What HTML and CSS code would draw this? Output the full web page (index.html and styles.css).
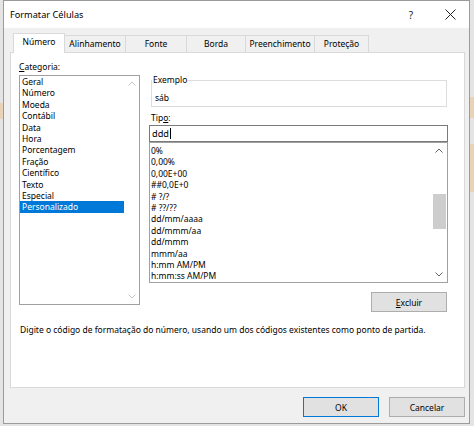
FILE: index.html
```html
<!DOCTYPE html>
<html lang="pt-BR">
<head>
<meta charset="utf-8">
<title>Formatar Células</title>
<link rel="stylesheet" href="styles.css">
</head>
<body>
<div class="dialog">
  <div class="titlebar">
    <span class="title">Formatar Células</span>
    <span class="tbtn help">?</span>
    <span class="tbtn close">
      <svg width="11" height="11" viewBox="0 0 11 11"><path d="M0.5 0.5 L10.5 10.5 M10.5 0.5 L0.5 10.5" stroke="#222" stroke-width="1" fill="none"/></svg>
    </span>
  </div>
  <div class="content">
    <div class="tabs">
      <div class="tab selected">Número</div>
      <div class="tab">Alinhamento</div>
      <div class="tab">Fonte</div>
      <div class="tab">Borda</div>
      <div class="tab">Preenchimento</div>
      <div class="tab">Proteção</div>
    </div>
    <div class="panel">
      <div class="cols">
        <div class="left">
          <div class="label"><u>C</u>ategoria:</div>
          <div class="listbox cat">
            <div class="items">
              <div class="item">Geral</div>
              <div class="item">Número</div>
              <div class="item">Moeda</div>
              <div class="item">Contábil</div>
              <div class="item">Data</div>
              <div class="item">Hora</div>
              <div class="item">Porcentagem</div>
              <div class="item">Fração</div>
              <div class="item">Científico</div>
              <div class="item">Texto</div>
              <div class="item">Especial</div>
              <div class="item sel">Personalizado</div>
            </div>
            <div class="vscroll disabled">
              <span class="arrow"><svg width="8" height="5" viewBox="0 0 8 5"><path d="M0.5 4.5 L4 1 L7.5 4.5" stroke="currentColor" fill="none"/></svg></span>
              <span class="track"></span>
              <span class="arrow"><svg width="8" height="5" viewBox="0 0 8 5"><path d="M0.5 0.5 L4 4 L7.5 0.5" stroke="currentColor" fill="none"/></svg></span>
            </div>
          </div>
        </div>
        <div class="right">
          <fieldset class="sample">
            <legend>Exemplo</legend>
            <div class="sample-value">sáb</div>
          </fieldset>
          <div class="label tipo">Tip<u>o</u>:</div>
          <div class="input">ddd<span class="caret"></span></div>
          <div class="listbox types">
            <div class="items">
              <div class="item">0%</div>
              <div class="item">0,00%</div>
              <div class="item">0,00E+00</div>
              <div class="item">##0,0E+0</div>
              <div class="item"># ?/?</div>
              <div class="item"># ??/??</div>
              <div class="item">dd/mm/aaaa</div>
              <div class="item">dd/mmm/aa</div>
              <div class="item">dd/mmm</div>
              <div class="item">mmm/aa</div>
              <div class="item">h:mm AM/PM</div>
              <div class="item">h:mm:ss AM/PM</div>
            </div>
            <div class="vscroll">
              <span class="arrow"><svg width="8" height="5" viewBox="0 0 8 5"><path d="M0.5 4.5 L4 1 L7.5 4.5" stroke="currentColor" fill="none"/></svg></span>
              <span class="track"><span class="thumb"></span></span>
              <span class="arrow"><svg width="8" height="5" viewBox="0 0 8 5"><path d="M0.5 0.5 L4 4 L7.5 0.5" stroke="currentColor" fill="none"/></svg></span>
            </div>
          </div>
          <div class="btnrow"><button class="btn"><u>E</u>xcluir</button></div>
        </div>
      </div>
      <p class="desc">Digite o código de formatação do número, usando um dos códigos existentes como ponto de partida.</p>
    </div>
    <div class="footer">
      <button class="btn default">OK</button>
      <button class="btn">Cancelar</button>
    </div>
  </div>
</div>
</body>
</html>
```
FILE: styles.css
```css
* { box-sizing: border-box; }

html, body {
  margin: 0;
  padding: 0;
}

body {
  width: 474px;
  height: 426px;
  overflow: hidden;
  background:
    linear-gradient(#e9d3b8, #e9d3b8) no-repeat 470px 97px / 4px 21px,
    linear-gradient(#e9d3b8, #e9d3b8) no-repeat 470px 144px / 4px 48px,
    linear-gradient(#e9d3b8, #e9d3b8) no-repeat 0 103px / 3px 16px,
    #e4e4e4;
  font-family: "Noto Sans", "DejaVu Sans", sans-serif;
  font-size: 8.5px;
  color: #000;
}

u { text-decoration: underline; text-underline-offset: 1px; }

.dialog {
  width: 467px;
  height: 424px;
  margin-left: 3px;
  border: 1px solid #9b9b9b;
  background: #f0f0f0;
  display: flex;
  flex-direction: column;
}

.titlebar {
  height: 27px;
  flex: none;
  background: #fff;
  display: flex;
  align-items: center;
  padding-left: 6px;
  font-size: 9.2px;
}

.title { flex: 1; }

.tbtn {
  display: flex;
  align-items: center;
  justify-content: center;
  height: 27px;
}

.help { width: 40px; font-size: 10px; color: #222; }
.close { width: 38px; }

.content {
  flex: 1;
  display: flex;
  flex-direction: column;
  padding: 5px 4px 0 6px;
}

.tabs {
  height: 19px;
  display: flex;
  align-items: flex-end;
  padding-left: 3px;
}

.tab {
  height: 17px;
  border: 1px solid #d9d9d9;
  border-bottom: none;
  background: #f0f0f0;
  display: flex;
  align-items: center;
  justify-content: center;
  margin-left: -1px;
  line-height: 1;
}

.tab:first-child { margin-left: 0; }
.tab:nth-child(1) { width: 52px; }
.tab:nth-child(2) { width: 62px; }
.tab:nth-child(3) { width: 62px; }
.tab:nth-child(4) { width: 60px; }
.tab:nth-child(5) { width: 70px; }
.tab:nth-child(6) { width: 55px; }

.tab.selected {
  height: 20px;
  margin-bottom: -1px;
  background: #fff;
  position: relative;
  z-index: 1;
  padding-bottom: 2px;
}

.panel {
  height: 336px;
  background: #fff;
  border: 1px solid #d9d9d9;
  padding: 8px 8px 0 8px;
}

.cols {
  display: flex;
  gap: 9px;
}

.left { width: 121px; }
.right { width: 299px; }

.label {
  height: 12px;
  line-height: 12px;
}

.listbox {
  border: 1px solid #a0a0a0;
  background: #fff;
  display: flex;
}

.listbox .items { flex: 1; }

.item {
  line-height: 11.4px;
  height: 11.4px;
  white-space: nowrap;
}

.cat {
  margin-top: 2px;
  height: 230px;
}

.cat .item { padding-left: 2px; }

.cat .item.sel {
  background: #0078d7;
  color: #fff;
}

.types {
  height: 141px;
}

.types .items { padding-top: 2px; }
.types .item { padding-left: 1px; }

.vscroll {
  width: 15px;
  display: flex;
  flex-direction: column;
  color: #606060;
  background: #fff;
}

.types .vscroll { width: 16px; }

.vscroll.disabled { color: #c4c4c4; }

.arrow {
  height: 15px;
  display: flex;
  align-items: center;
  justify-content: center;
}

.track {
  flex: 1;
  display: flex;
  justify-content: center;
}

.thumb {
  width: 13px;
  height: 35px;
  margin-top: 36px;
  background: #cdcdcd;
}

.sample {
  margin: 13px 1px 0 2px;
  padding: 6px 0 2px 0;
  border: 1px solid #dcdcdc;
  min-width: 0;
}

.sample legend {
  padding: 0 1px;
  margin-left: 0;
  line-height: 12px;
  height: 12px;
}

.sample-value {
  padding-left: 3px;
  line-height: 12px;
  height: 12px;
}

.tipo {
  margin-top: 5px;
  padding-left: 2px;
}

.input {
  margin-top: 1px;
  height: 17px;
  border: 1px solid #7a7a7a;
  padding-left: 2px;
  display: flex;
  align-items: center;
  font-size: 9.2px;
}

.caret {
  width: 1px;
  height: 11px;
  background: #000;
  margin-left: 1px;
}

.btnrow {
  display: flex;
  justify-content: flex-end;
  margin-top: 9px;
  padding-right: 1px;
}

.btn {
  width: 76px;
  height: 20px;
  border: 1px solid #adadad;
  background: #e1e1e1;
  font: inherit;
  color: #000;
  padding: 0;
  margin: 0;
}

.btn.default {
  border-color: #0078d7;
}

.desc {
  margin: 12px 0 0 1px;
  line-height: 12px;
  white-space: nowrap;
}

.footer {
  display: flex;
  justify-content: flex-end;
  gap: 10px;
  margin-top: 9px;
}
```
